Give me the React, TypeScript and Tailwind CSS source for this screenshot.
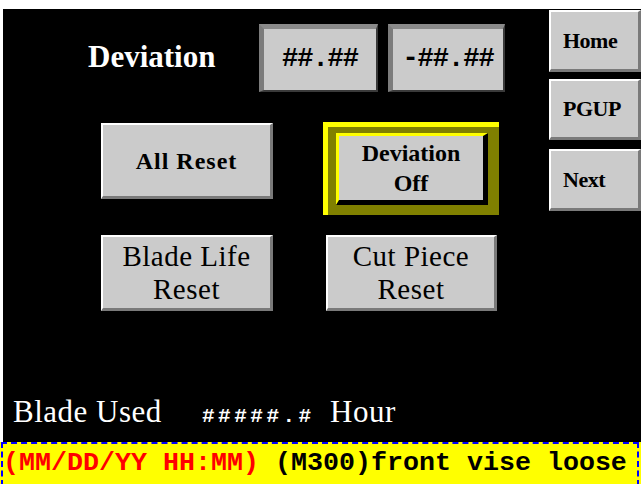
import React from "react";

const serif = { fontFamily: '"Liberation Serif", "Times New Roman", serif' };
const mono = { fontFamily: '"Liberation Mono", "Courier New", monospace' };

function Raised({ className, children }: { className: string; children: React.ReactNode }) {
  return (
    <div
      className={`bg-[#cbcbcb] border-t-2 border-l-2 border-t-white border-l-white border-b-[3px] border-r-[3px] border-b-[#7a7a7a] border-r-[#7a7a7a] flex items-center text-black ${className}`}
      style={serif}
    >
      {children}
    </div>
  );
}

function ValueBox({ w, text }: { w: string; text: string }) {
  return (
    <div
      className={`${w} h-[68px] bg-[#cbcbcb] border-t-[5px] border-l-[5px] border-t-[#8a8a8a] border-l-[#7c7c7c] border-r-2 border-b-2 border-r-[#3a3a3a] border-b-[#3a3a3a] flex items-center justify-center text-black font-bold text-[27px] tracking-[-1px] leading-none`}
      style={mono}
    >
      {text}
    </div>
  );
}

export default function App() {
  return (
    <div className="w-[641px] h-[484px] bg-white pt-[9px] flex flex-col overflow-hidden">
      <div className="flex-1 ml-[3px] bg-black flex flex-col">
        <div className="flex">
          <div className="w-[546px] flex flex-col">
            <div className="flex items-center mt-[15px]">
              <div className="w-[256px] pl-[85px] text-white font-bold text-[31px] leading-none pb-[4px]" style={serif}>
                Deviation
              </div>
              <ValueBox w="w-[119px]" text="##.##" />
              <div className="w-[10px]" />
              <ValueBox w="w-[117px]" text="-##.##" />
            </div>
            <div className="flex items-start mt-[30px]">
              <Raised className="ml-[98px] mt-[1px] w-[172px] h-[76px] justify-center">
                <span className="font-bold text-[24px] tracking-[1px] leading-none">All Reset</span>
              </Raised>
              <div className="ml-[50px] w-[176px] h-[93px] bg-[#808000] border-t-[5px] border-l-[5px] border-[#ffff00] pl-[8px] pt-[6px]">
                <div
                  className="w-[152px] h-[72px] bg-[#cbcbcb] border-t-[3px] border-l-[3px] border-t-[#ffff00] border-l-[#ffff00] border-b-[5px] border-r-[5px] border-b-black border-r-black flex flex-col items-center justify-center text-black font-bold text-[24px] leading-[30px]"
                  style={serif}
                >
                  <span>Deviation</span>
                  <span>Off</span>
                </div>
              </div>
            </div>
            <div className="flex items-start mt-[20px]">
              <Raised className="ml-[98px] w-[172px] h-[76px] flex-col justify-center">
                <span className="text-[29px] tracking-[0.5px] leading-[33px]">Blade Life</span>
                <span className="text-[29px] tracking-[0.5px] leading-[33px]">Reset</span>
              </Raised>
              <Raised className="ml-[53px] w-[171px] h-[76px] flex-col justify-center">
                <span className="text-[29px] tracking-[0.5px] leading-[33px]">Cut Piece</span>
                <span className="text-[29px] tracking-[0.5px] leading-[33px]">Reset</span>
              </Raised>
            </div>
          </div>
          <div className="flex flex-col pt-[1px]">
            <Raised className="w-[92px] h-[62px] pl-[12px]">
              <span className="font-bold text-[22px] tracking-[-0.5px] leading-none">Home</span>
            </Raised>
            <Raised className="w-[92px] h-[61px] mt-[7px] pl-[12px]">
              <span className="font-bold text-[22px] tracking-[-0.5px] leading-none">PGUP</span>
            </Raised>
            <Raised className="w-[92px] h-[62px] mt-[9px] pl-[12px]">
              <span className="font-bold text-[22px] tracking-[-0.5px] leading-none">Next</span>
            </Raised>
          </div>
        </div>
        <div className="flex-1" />
        <div className="flex items-baseline pl-[10px] pb-[10px] text-white whitespace-nowrap">
          <span className="w-[189px] text-[31px] tracking-[0.5px] leading-[30px]" style={serif}>
            Blade Used
          </span>
          <span className="w-[128px] font-bold text-[21px] tracking-[3.5px] leading-[30px]" style={mono}>
            #####.#
          </span>
          <span className="text-[31px] tracking-[0.5px] leading-[30px]" style={serif}>
            Hour
          </span>
        </div>
      </div>
      <div className="h-[42px] bg-[#ffff00] pl-[1px] pr-[2px]">
        <div
          className="h-[44px] border-2 border-dashed border-[#0000ff] whitespace-nowrap font-bold text-[26.67px] leading-[38px] text-black"
          style={mono}
        >
          <span className="text-[#ff0000]">(MM/DD/YY HH:MM)</span> (M300)front vise loose
        </div>
      </div>
    </div>
  );
}
